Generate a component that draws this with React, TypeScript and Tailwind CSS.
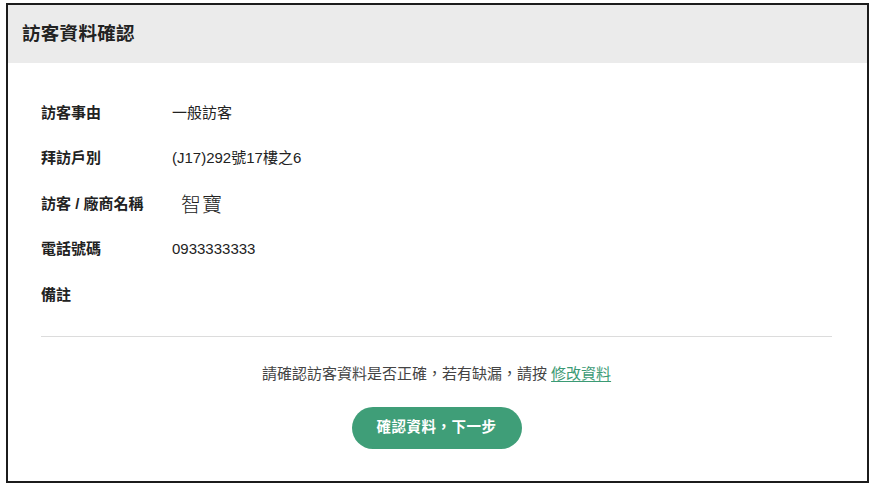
const rows: { label: string; value: string; big?: boolean }[] = [
  { label: "訪客事由", value: "一般訪客" },
  { label: "拜訪戶別", value: "(J17)292號17樓之6" },
  { label: "訪客 / 廠商名稱", value: "智寶", big: true },
  { label: "電話號碼", value: "0933333333" },
  { label: "備註", value: "" },
]

export default function App() {
  return (
    <div className="w-[877px] h-[490px] bg-white pl-[6px] pt-[3px] font-['Liberation_Sans','Noto_Sans_CJK_TC',sans-serif] text-[#333]">
      <div className="w-[863px] h-[480px] border-2 border-[#1c1c1c] flex flex-col">
        <div className="h-[58px] bg-[#ebebeb] flex items-center pl-[14px]">
          <h1 className="text-[18.5px] font-bold text-[#222] tracking-[0.3px]">訪客資料確認</h1>
        </div>

        <div className="px-[33px] pt-[27px]">
          {rows.map((row) => (
            <div key={row.label} className="h-[45.5px] flex items-center">
              <div className="w-[131px] text-[15px] font-bold text-[#222]">{row.label}</div>
              {row.big ? (
                <div className="pl-[9px] text-[20px] font-['Noto_Sans_CJK_TC',sans-serif] font-light text-[#222] tracking-[1px]">
                  {row.value}
                </div>
              ) : (
                <div className="text-[15px] text-[#222]">{row.value}</div>
              )}
            </div>
          ))}

          <div className="mt-[18px] h-px bg-[#dcdcdc] w-[791px]" />

          <p className="mt-[27px] text-center text-[15px] leading-[20px] text-[#444] w-[791px]">
            請確認訪客資料是否正確，若有缺漏，請按{" "}
            <a href="#" className="text-[#3b9a74] underline underline-offset-2">
              修改資料
            </a>
          </p>

          <div className="w-[791px] flex justify-center mt-[23px]">
            <button className="w-[170px] h-[42px] rounded-full bg-[#3f9e78] text-white text-[14.5px] font-bold tracking-[0.5px]">
              確認資料，下一步
            </button>
          </div>
        </div>
      </div>
    </div>
  )
}
